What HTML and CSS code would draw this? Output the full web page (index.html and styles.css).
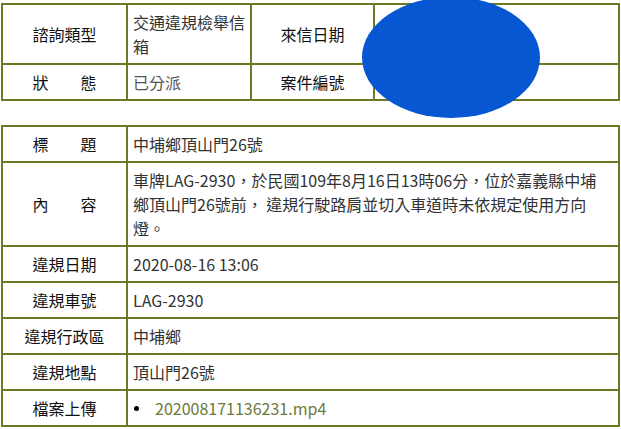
FILE: index.html
```html
<!DOCTYPE html>
<html lang="zh-Hant">
<head>
<meta charset="utf-8">
<title>案件資料</title>
<link rel="stylesheet" href="styles.css">
</head>
<body>
<div class="page">
  <table class="info info-top">
    <colgroup>
      <col class="c-label"><col class="c-val"><col class="c-label2"><col class="c-wide">
    </colgroup>
    <tr class="r-tall">
      <th>諮詢類型</th>
      <td>交通違規檢舉信箱</td>
      <th>來信日期</th>
      <td></td>
    </tr>
    <tr>
      <th>狀　　態</th>
      <td class="muted">已分派</td>
      <th>案件編號</th>
      <td></td>
    </tr>
  </table>

  <table class="info info-main">
    <colgroup>
      <col class="c-label"><col>
    </colgroup>
    <tr>
      <th>標　　題</th>
      <td>中埔鄉頂山門26號</td>
    </tr>
    <tr>
      <th>內　　容</th>
      <td>車牌LAG-2930，於民國109年8月16日13時06分，位於嘉義縣中埔鄉頂山門26號前， 違規行駛路肩並切入車道時未依規定使用方向燈。</td>
    </tr>
    <tr>
      <th>違規日期</th>
      <td>2020-08-16 13:06</td>
    </tr>
    <tr>
      <th>違規車號</th>
      <td>LAG-2930</td>
    </tr>
    <tr>
      <th>違規行政區</th>
      <td>中埔鄉</td>
    </tr>
    <tr>
      <th>違規地點</th>
      <td>頂山門26號</td>
    </tr>
    <tr>
      <th>檔案上傳</th>
      <td>
        <ul class="files"><li><a href="#">202008171136231.mp4</a></li></ul>
      </td>
    </tr>
  </table>

  <div class="redact"></div>
</div>
</body>
</html>
```
FILE: styles.css
```css
html, body {
  margin: 0;
  padding: 0;
  background: #fff;
}
body {
  font-family: "Noto Sans CJK TC", "Noto Sans", sans-serif;
  font-size: 16px;
  line-height: 24px;
  color: #333;
}
.page {
  position: relative;
  padding: 3px 0 0 1px;
}
.info {
  border-collapse: collapse;
  table-layout: fixed;
  width: 619px;
  border: 2px solid #6b7a23;
}
.info th,
.info td {
  border: 2px solid #6b7a23;
  padding: 5px 3px 5px 5px;
  vertical-align: middle;
}
.info th {
  font-weight: normal;
  color: #111;
  text-align: center;
  padding: 5px 2px;
}
.info td {
  text-align: left;
}
.info-main td {
  padding-right: 20px;
}
.info-top {
  margin-bottom: 24px;
}
.c-label { width: 125px; }
.c-val { width: 124px; }
.c-label2 { width: 123px; }
.muted { color: #555; }
.files {
  margin: 0;
  padding: 0;
  list-style: none;
}
.files li {
  position: relative;
  padding-left: 22px;
}
.files li::before {
  content: "";
  position: absolute;
  left: 1px;
  top: 10px;
  width: 5px;
  height: 5px;
  border-radius: 50%;
  background: #000;
}
.files a {
  color: #6b7a3a;
  text-decoration: none;
}
.redact {
  position: absolute;
  left: 362px;
  top: -3px;
  width: 178px;
  height: 121px;
  border-radius: 50%;
  background: #0657d1;
}
```
